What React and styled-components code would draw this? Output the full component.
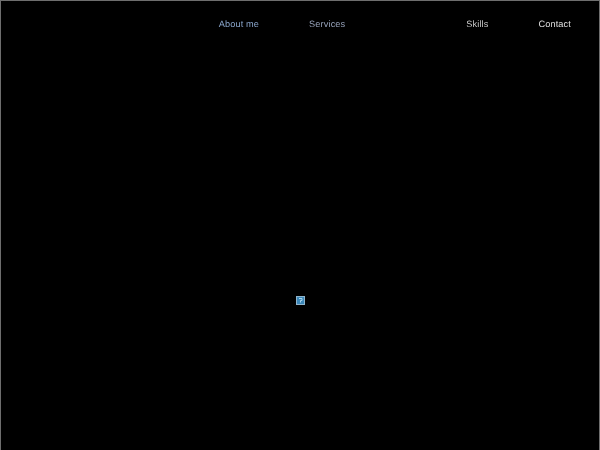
import React from "react";
import styled, { createGlobalStyle } from "styled-components";

const Global = createGlobalStyle`
  html, body { margin: 0; padding: 0; background: #000; }
  body { width: 600px; height: 450px; overflow: hidden; }
`;

const Frame = styled.div`
  box-sizing: border-box;
  width: 600px;
  height: 450px;
  background: #000;
  border: 1px solid #6e6e6e;
  border-bottom: 0;
  display: flex;
  flex-direction: column;
  font-family: "Liberation Sans", Arial, sans-serif;
`;

const Nav = styled.nav`
  display: flex;
  justify-content: flex-end;
  gap: 50px;
  padding: 17px 28px 0 0;
  filter: blur(0.25px);
`;

const NavLink = styled.a`
  font-size: 9.2px;
  line-height: 12px;
  letter-spacing: 0.12px;
  text-rendering: geometricPrecision;
  color: ${(p) => p.$color};
  white-space: nowrap;
`;

const Ghost = styled.span`
  width: 21px;
`;

const Stage = styled.main`
  display: flex;
  justify-content: center;
  padding-top: 266px;
`;

const BrokenImage = styled.svg`
  display: block;
  width: 9px;
  height: 9px;
`;

export default function App() {
  return (
    <>
      <Global />
      <Frame>
        <Nav>
          <NavLink $color="#8aa6cc">About me</NavLink>
          <NavLink $color="#98a4bc">Services</NavLink>
          <Ghost />
          <NavLink $color="#cccccc">Skills</NavLink>
          <NavLink $color="#e0e0e0">Contact</NavLink>
        </Nav>
        <Stage>
          <BrokenImage viewBox="0 0 9 9">
            <rect width="9" height="9" fill="#8fb4cc" />
            <rect x="1" y="1" width="7" height="7" fill="#3a86b8" />
            <path d="M3 2.5H6V4.5H4.5V6M4.5 6.5V7" stroke="#a8d4ea" strokeWidth="1" fill="none" />
          </BrokenImage>
        </Stage>
      </Frame>
    </>
  );
}
